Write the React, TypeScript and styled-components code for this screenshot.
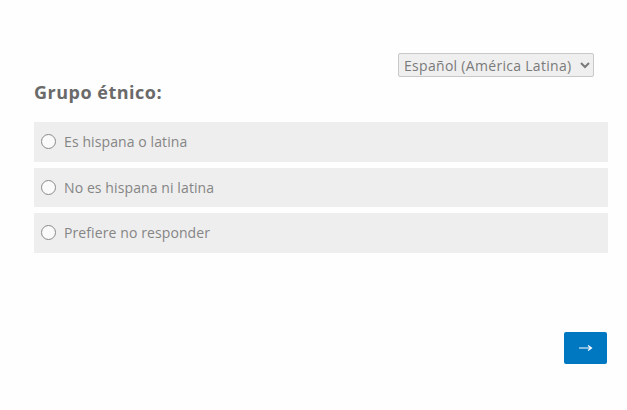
import React from "react";
import styled, { createGlobalStyle } from "styled-components";

const Global = createGlobalStyle`
  html, body { margin: 0; padding: 0; background: #fefefe; }
  body { font-family: "Open Sans", "Noto Sans", sans-serif; }
`;

const Page = styled.div`
  width: 627px;
  height: 410px;
  box-sizing: border-box;
  padding: 53px 19px 0 34px;
  display: flex;
  flex-direction: column;
`;

const TopBar = styled.div`
  display: flex;
  justify-content: flex-end;
  padding-right: 14px;
`;

const Select = styled.select`
  width: 196px;
  height: 24px;
  font-family: inherit;
  font-size: 14px;
  letter-spacing: 0.3px;
  color: #7a7a7a;
  background: #efefef;
  border: 1px solid #c8c8c8;
  border-radius: 2px;
  padding: 0 1px;
`;

const Heading = styled.h2`
  margin: 4px 0 19px;
  font-size: 18px;
  font-weight: 700;
  letter-spacing: 0.5px;
  color: #6a6a6a;
  line-height: 22px;
`;

const Options = styled.div`
  display: flex;
  flex-direction: column;
  gap: 6px;
`;

const Row = styled.label`
  display: flex;
  align-items: center;
  gap: 8px;
  height: 39.5px;
  padding-left: 7px;
  background: #eeeeee;
  font-size: 14px;
  letter-spacing: 0.1px;
  color: #858585;
  cursor: pointer;
`;

const Radio = styled.span`
  width: 13px;
  height: 13px;
  border: 1px solid #8a8a8a;
  border-radius: 50%;
  background: #fafafa;
  flex: none;
`;

const Footer = styled.div`
  display: flex;
  justify-content: flex-end;
  margin-top: 79px;
  padding-right: 1px;
`;

const NextButton = styled.button`
  width: 43px;
  height: 32px;
  border: none;
  border-radius: 2px;
  background: #0078c1;
  color: #fff;
  font-size: 16px;
  display: flex;
  align-items: center;
  justify-content: center;
  padding: 0;
`;

const options = ["Es hispana o latina", "No es hispana ni latina", "Prefiere no responder"];

export default function App() {
  return (
    <>
      <Global />
      <Page>
        <TopBar>
          <Select defaultValue="es">
            <option value="es">Español (América Latina)</option>
          </Select>
        </TopBar>
        <Heading>Grupo étnico:</Heading>
        <Options>
          {options.map((o) => (
            <Row key={o}>
              <Radio />
              {o}
            </Row>
          ))}
        </Options>
        <Footer>
          <NextButton aria-label="Siguiente">
            <svg width="14" height="8" viewBox="0 0 14 8">
              <path d="M0 4h12M9 1.5L12.5 4 9 6.5" stroke="#fff" strokeWidth="1.2" fill="none" />
            </svg>
          </NextButton>
        </Footer>
      </Page>
    </>
  );
}
